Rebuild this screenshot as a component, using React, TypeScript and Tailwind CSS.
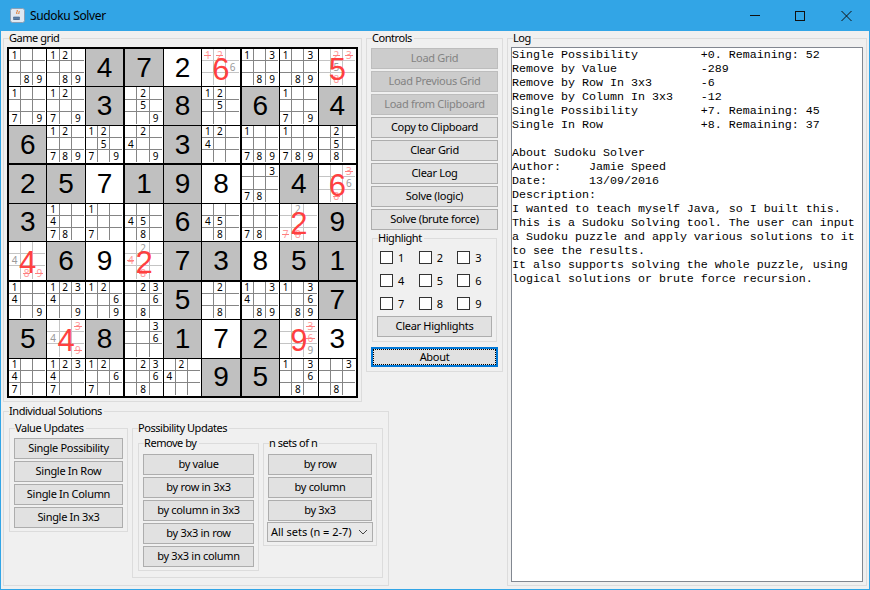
import React from "react";

type CellDef = string;
const GRID: CellDef[][] = [
  ["189", "1289", "g4", "g7", "w2", "r6:6:12", "1389", "1389", "r5:5:238"],
  ["179", "1279", "g3", "259", "g8", "125", "g6", "179", "g4"],
  ["g6", "12789", "12579", "249", "g3", "124", "1789", "1789", "258"],
  ["g2", "g5", "w7", "g1", "g9", "w8", "378", "g4", "r6:6:38"],
  ["g3", "1478", "17", "458", "g6", "458", "78", "r2:2:78", "g9"],
  ["r4:4:89", "g6", "w9", "r2:2:48", "g7", "g3", "w8", "g5", "g1"],
  ["149", "12349", "1269", "2368", "g5", "28", "13489", "13689", "g7"],
  ["g5", "r4:4:39", "g8", "36", "g1", "w7", "g2", "r9:9:36", "w3"],
  ["147", "12347", "1267", "2368", "24", "g9", "g5", "1368", "38"],
];

const DIGITS = ["1", "2", "3", "4", "5", "6", "7", "8", "9"];

function Pencil({ marks, struck = "", light = false }: { marks: string; struck?: string; light?: boolean }) {
  return (
    <div className="grid h-full w-full grid-cols-3 grid-rows-3 bg-white pb-[1px] pr-[1px]">
      {DIGITS.map((d, i) => {
        const isStruck = struck.includes(d);
        const shown = marks.includes(d) || isStruck;
        const edgeR = i % 3 < 2;
        const edgeB = i < 6;
        return (
          <div
            key={d}
            className={`relative flex items-center justify-center text-[10px] leading-none ${edgeR ? (light ? "border-r border-[#c4c4c4]" : "border-r border-[#858585]") : ""} ${edgeB ? (light ? "border-b border-[#c4c4c4]" : "border-b border-[#858585]") : ""} ${isStruck ? "text-[#ff9a9a]" : light ? "text-[#9a9a9a]" : "text-black"}`}
          >
            {shown ? d : ""}
            {isStruck ? <span className="absolute left-[2px] right-[2px] top-1/2 h-[1px] bg-[#ff8080]" /> : null}
          </div>
        );
      })}
    </div>
  );
}

function Cell({ def }: { def: CellDef }) {
  if (def[0] === "g" || def[0] === "w") {
    return (
      <div className={`flex items-center justify-center font-['Liberation_Sans',sans-serif] text-[28px] leading-none text-black ${def[0] === "g" ? "bg-[#c0c0c0]" : "bg-white"}`}>
        {def[1]}
      </div>
    );
  }
  if (def[0] === "r") {
    const [head, kept, struck] = def.split(":");
    return (
      <div className="relative bg-white">
        <Pencil marks={kept} struck={struck} light />
        <div className="absolute inset-0 flex items-center justify-center pt-[3px] font-['Liberation_Sans',sans-serif] text-[31px] leading-none text-[#ff4040]">
          {head[1]}
        </div>
      </div>
    );
  }
  return (
    <div className="bg-white">
      <Pencil marks={def} />
    </div>
  );
}

function Board() {
  const boxes = [0, 1, 2].flatMap((by) => [0, 1, 2].map((bx) => ({ bx, by })));
  return (
    <div className="ml-[3px] mt-[2px] grid h-[351px] w-[351px] grid-cols-3 grid-rows-3 gap-[2px] bg-black p-[2px]">
      {boxes.map(({ bx, by }) => (
        <div key={`${bx}${by}`} className="grid grid-cols-3 grid-rows-3 gap-[1px]">
          {[0, 1, 2].flatMap((y) =>
            [0, 1, 2].map((x) => <Cell key={`${x}${y}`} def={GRID[by * 3 + y][bx * 3 + x]} />)
          )}
        </div>
      ))}
    </div>
  );
}

function Group({ title, className, children }: { title: string; className?: string; children: React.ReactNode }) {
  return (
    <fieldset className={`border border-[#dcdcdc] ${className ?? ""}`}>
      <legend className="ml-[5px] h-[14px] pr-[2px] text-[11px] leading-[14px] tracking-[-0.45px] text-black">{title}</legend>
      {children}
    </fieldset>
  );
}

function Btn({ label, disabled, className }: { label: string; disabled?: boolean; className?: string }) {
  return (
    <button
      className={`flex h-[21px] w-full items-center justify-center border pb-[2px] text-[11px] leading-none tracking-[-0.3px] ${disabled ? "border-[#bdbdbd] bg-[#cccccc] text-[#838383]" : "border-[#adadad] bg-[#e1e1e1] text-black"} ${className ?? ""}`}
    >
      {label}
    </button>
  );
}

function TitleBar() {
  return (
    <div className="flex h-[31px] items-center bg-[#32a5e6] pl-[10px] text-black">
      <svg width="15" height="15" viewBox="0 0 15 15" className="shrink-0">
        <rect x="0.5" y="0.5" width="14" height="14" rx="2" fill="#dfe8f2" stroke="#8a9fb5" />
        <path d="M3 11.5h7M3.5 9h6v1.5c0 .6-.5 1-1 1h-4c-.6 0-1-.4-1-1z" fill="#5a7fa8" stroke="#3f6188" strokeWidth="0.6" />
        <path d="M7 2c1.5 1.4-1.5 2.2 0 4M9 3c1 1-1 1.6 0 3" stroke="#e2711d" strokeWidth="1" fill="none" />
      </svg>
      <span className="ml-[5px] text-[12px] tracking-[-0.35px]">Sudoku Solver</span>
      <svg width="120" height="12" viewBox="0 0 120 12" className="ml-auto mr-[8px]" stroke="#111" fill="none">
        <path d="M8 5.5h10" />
        <rect x="53.5" y="1.5" width="9" height="9" />
        <path d="M99.5 1 L109.5 11 M109.5 1 L99.5 11" />
      </svg>
    </div>
  );
}

const LOG = [
  "Single Possibility         +0. Remaining: 52",
  "Remove by Value            -289",
  "Remove by Row In 3x3       -6",
  "Remove by Column In 3x3    -12",
  "Single Possibility         +7. Remaining: 45",
  "Single In Row              +8. Remaining: 37",
  "",
  "About Sudoku Solver",
  "Author:    Jamie Speed",
  "Date:      13/09/2016",
  "Description:",
  "I wanted to teach myself Java, so I built this.",
  "This is a Sudoku Solving tool. The user can input",
  "a Sudoku puzzle and apply various solutions to it",
  "to see the results.",
  "It also supports solving the whole puzzle, using",
  "logical solutions or brute force recursion.",
];

export default function App() {
  return (
    <div className="flex h-[590px] w-[870px] flex-col overflow-hidden bg-[#32a5e6] font-['Noto_Sans',sans-serif]">
      <TitleBar />
      <div className="mx-[1px] mb-[1px] flex h-[558px] bg-[#f0f0f0] pl-[2px]">
        <div className="flex w-[500px] flex-col">
          <div className="flex gap-[4px]">
            <Group title="Game grid" className="h-[371px] w-[359px]">
              <Board />
            </Group>
            <Group title="Controls" className="h-[341px] w-[137px]">
              <div className="px-[4px]">
                <div className="flex flex-col gap-[2px] pt-[3px]">
                  <Btn label="Load Grid" disabled />
                  <Btn label="Load Previous Grid" disabled />
                  <Btn label="Load from Clipboard" disabled />
                  <Btn label="Copy to Clipboard" />
                  <Btn label="Clear Grid" />
                  <Btn label="Clear Log" />
                  <Btn label="Solve (logic)" />
                  <Btn label="Solve (brute force)" />
                </div>
                <Group title="Highlight" className="mx-[1px] mt-[1px] h-[111px] w-[125px]">
                  <div className="grid grid-cols-3 gap-y-[10px] pl-[7px] pt-[6px]">
                    {DIGITS.map((d) => (
                      <label key={d} className="flex h-[13px] items-center gap-[5px] text-[11px] leading-none">
                        <input type="checkbox" className="h-[13px] w-[13px] appearance-none border border-[#333333] bg-white" />
                        {d}
                      </label>
                    ))}
                  </div>
                  <div className="mx-[4px] mt-[6px]">
                    <Btn label="Clear Highlights" />
                  </div>
                </Group>
                <div className="mt-[5px] h-[20px] border-2 border-[#0078d7]">
                  <div className="flex h-full items-center justify-center border border-dotted border-black bg-[#e1e1e1] pb-[2px] text-[11px] leading-none tracking-[-0.3px]">
                    About
                  </div>
                </div>
              </div>
            </Group>
          </div>
          <Group title="Individual Solutions" className="mt-[2px] h-[182px] w-[386px]">
            <div className="mt-[3px] flex items-start gap-[4px] px-[5px]">
              <Group title="Value Updates" className="w-[119px]">
                <div className="flex flex-col gap-[2px] px-[4px] pb-[3px] pt-[3px]">
                  <Btn label="Single Possibility" />
                  <Btn label="Single In Row" />
                  <Btn label="Single In Column" />
                  <Btn label="Single In 3x3" />
                </div>
              </Group>
              <Group title="Possibility Updates" className="h-[157px] w-[251px]">
                <div className="mt-[1px] flex items-start gap-[4px] px-[5px]">
                  <Group title="Remove by" className="w-[121px]">
                    <div className="flex flex-col gap-[2px] px-[4px] pb-[3px] pt-[4px]">
                      <Btn label="by value" />
                      <Btn label="by row in 3x3" />
                      <Btn label="by column in 3x3" />
                      <Btn label="by 3x3 in row" />
                      <Btn label="by 3x3 in column" />
                    </div>
                  </Group>
                  <Group title="n sets of n" className="w-[114px]">
                    <div className="flex flex-col gap-[2px] px-[4px] pt-[4px]">
                      <Btn label="by row" />
                      <Btn label="by column" />
                      <Btn label="by 3x3" />
                      <div className="-mx-[1px] -mt-[1px] mb-[3px] flex h-[20px] items-center border border-[#adadad] bg-[#e8e8e8] pb-[1px] pl-[3px] pr-[4px] text-[11px] leading-none">
                        <span className="whitespace-nowrap">All sets (n = 2-7)</span>
                        <svg width="10" height="6" viewBox="0 0 10 6" className="ml-auto" fill="none" stroke="#444" strokeWidth="1">
                          <path d="M1 1l4 4 4-4" />
                        </svg>
                      </div>
                    </div>
                  </Group>
                </div>
              </Group>
            </div>
          </Group>
        </div>
        <Group title="Log" className="ml-[4px] h-[555px] w-[360px]">
          <div className="ml-[3px] mt-[2px] h-[535px] w-[352px] overflow-hidden border border-[#828790] bg-white font-['Liberation_Mono',monospace] text-[11.67px] leading-[14px] text-black">
            {LOG.map((l, i) => (
              <div key={i} className="h-[14px] whitespace-pre">
                {l}
              </div>
            ))}
          </div>
        </Group>
      </div>
    </div>
  );
}
